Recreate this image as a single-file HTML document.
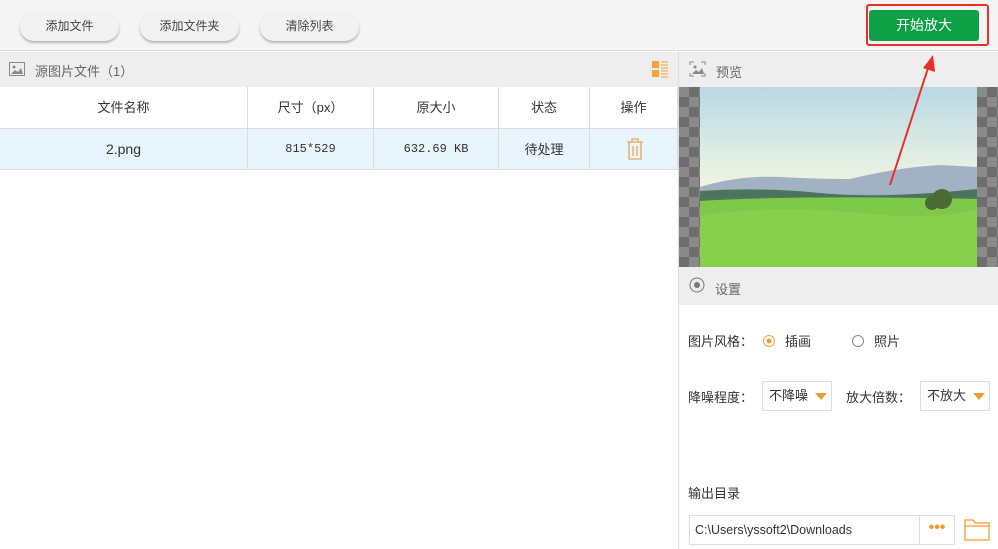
<!DOCTYPE html>
<html><head><meta charset="utf-8"><style>
*{margin:0;padding:0;box-sizing:border-box}
body{width:998px;height:549px;position:relative;overflow:hidden;background:#fff;font-family:"Liberation Sans","Noto Sans CJK SC",sans-serif;font-size:13px;color:#333}
.abs{position:absolute}
.btn{position:absolute;top:12px;height:29px;width:99px;border-radius:14px;background:#f2f2f2;box-shadow:0 2px 2px rgba(0,0,0,.25);text-align:center;line-height:28px;font-size:12px;color:#444}
.th,.td{position:absolute;text-align:center;border-right:1px solid #dcdcdc}
.th{top:87px;height:42px;line-height:42px;border-bottom:1px solid #dcdcdc}
.td{top:129px;height:41px;line-height:41px;background:#e9f5fd;border-bottom:1px solid #dcdcdc}
.chk{background-color:#8a8a8a;background-image:linear-gradient(45deg,#6e6e6e 25%,transparent 25%,transparent 75%,#6e6e6e 75%),linear-gradient(45deg,#6e6e6e 25%,transparent 25%,transparent 75%,#6e6e6e 75%);background-size:20px 20px;background-position:0 0,10px 10px}
</style></head><body>
<div class="abs" style="left:0;top:0;width:998px;height:51px;background:#f4f4f4;border-bottom:1px solid #ddd"></div>
<div class="btn" style="left:20px">添加文件</div>
<div class="btn" style="left:140px">添加文件夹</div>
<div class="btn" style="left:260px">清除列表</div>
<div class="abs" style="left:866px;top:4px;width:123px;height:42px;border:2px solid #e8302a;border-radius:3px"></div>
<div class="abs" style="left:869px;top:10px;width:110px;height:31px;background:#0fa046;border-radius:3px;color:#fff;font-size:14px;text-align:center;line-height:31px">开始放大</div>
<div class="abs" style="left:0;top:52px;width:678px;height:35px;background:#eeeeee"></div>
<svg class="abs" style="left:9px;top:62px" width="16" height="14"><rect x=".5" y=".5" width="15" height="13" fill="none" stroke="#888"/><circle cx="5" cy="5" r="1.5" fill="#888"/><path d="M2 12 L6 8 L9 10 L12 6 L14 12Z" fill="#888"/></svg>
<div class="abs" style="left:35px;top:61px;font-size:13px;color:#666">源图片文件（1）</div>
<svg class="abs" style="left:651px;top:60px" width="18" height="18"><rect x="1" y="1" width="7" height="7" fill="#f7a233"/><rect x="1" y="10" width="7" height="7" fill="#f7a233"/><path d="M10 2h7M10 5h7M10 8h7M10 11h7M10 14h7M10 17h7" stroke="#f7a233"/></svg>
<div class="th" style="left:0;width:248px">文件名称</div>
<div class="th" style="left:248px;width:126px">尺寸（px）</div>
<div class="th" style="left:374px;width:125px">原大小</div>
<div class="th" style="left:499px;width:91px">状态</div>
<div class="th" style="left:590px;width:88px">操作</div>
<div class="td" style="left:0;width:248px;font-size:14px">2.png</div>
<div class="td" style="left:248px;width:126px;font-family:'Liberation Mono',monospace;font-size:12px">815*529</div>
<div class="td" style="left:374px;width:125px;font-family:'Liberation Mono',monospace;font-size:12px">632.69 KB</div>
<div class="td" style="left:499px;width:91px">待处理</div>
<div class="td" style="left:590px;width:88px"></div>
<svg class="abs" style="left:625px;top:138px" width="20" height="22"><path d="M2 4h16M7 4V1h6v3M4 4v17h12V4M8 8v10M12 8v10" fill="none" stroke="#e3a85a" stroke-width="1.3"/></svg>
<div class="abs" style="left:678px;top:51px;width:1px;height:498px;background:#ddd"></div>
<div class="abs" style="left:679px;top:52px;width:319px;height:35px;background:#eeeeee"></div>
<svg class="abs" style="left:689px;top:61px" width="17" height="16"><path d="M1 4V1h4M12 1h4v3M16 12v3h-4M5 15H1v-3" fill="none" stroke="#888"/><circle cx="6" cy="6" r="1.5" fill="#888"/><path d="M3 13L7 9 10 11 13 7 15 13Z" fill="#888"/></svg>
<div class="abs" style="left:716px;top:62px;color:#666">预览</div>
<div class="abs chk" style="left:679px;top:87px;width:21px;height:180px"></div>
<div class="abs chk" style="left:977px;top:87px;width:21px;height:180px"></div>
<div class="abs" style="left:700px;top:87px;width:277px;height:180px;background:linear-gradient(180deg,#b8d8e4 0%,#e2eee4 40%,#f3f4df 58%,#9fb3c7 64%)"></div>
<svg class="abs" style="left:700px;top:87px" width="277" height="180"><path d="M0 100 Q40 88 80 90 T150 92 Q200 80 240 78 L277 80 L277 110 L0 110Z" fill="#8ea1bb" opacity=".8"/><path d="M0 104 Q60 100 120 106 T277 102 L277 118 L0 118Z" fill="#3d6a4a" opacity=".85"/><path d="M0 114 Q100 108 277 112 L277 180 L0 180Z" fill="#7ec94a"/><path d="M0 128 Q80 118 160 126 T277 122 L277 180 L0 180Z" fill="#8fd44c" opacity=".6"/><circle cx="242" cy="112" r="10" fill="#4e6a34"/><circle cx="232" cy="116" r="7" fill="#4e6a34"/></svg>
<svg class="abs" style="left:885px;top:50px" width="55" height="140"><path d="M5 135 L45 12" stroke="#e8302a" stroke-width="2"/><path d="M38 18 L48 5 L50 22Z" fill="#e8302a"/></svg>
<div class="abs" style="left:679px;top:267px;width:319px;height:38px;background:#eeeeee"></div>
<svg class="abs" style="left:689px;top:277px" width="16" height="16"><circle cx="8" cy="8" r="7" fill="none" stroke="#777"/><circle cx="8" cy="8" r="3" fill="#777"/></svg>
<div class="abs" style="left:715px;top:279px;color:#666">设置</div>
<div class="abs" style="left:688px;top:331px">图片风格：</div>
<svg class="abs" style="left:762px;top:334px" width="14" height="14"><circle cx="7" cy="7" r="5.5" fill="none" stroke="#f29b30"/><circle cx="7" cy="7" r="2.5" fill="#f29b30"/></svg>
<div class="abs" style="left:785px;top:331px">插画</div>
<svg class="abs" style="left:851px;top:334px" width="14" height="14"><circle cx="7" cy="7" r="5.5" fill="none" stroke="#888"/></svg>
<div class="abs" style="left:874px;top:331px">照片</div>
<div class="abs" style="left:688px;top:387px">降噪程度：</div>
<div class="abs" style="left:762px;top:381px;width:70px;height:30px;border:1px solid #ddd;padding-left:6px;line-height:28px">不降噪</div>
<svg class="abs" style="left:815px;top:393px" width="12" height="7"><path d="M0 0h12L6 7Z" fill="#f29b30"/></svg>
<div class="abs" style="left:846px;top:387px">放大倍数：</div>
<div class="abs" style="left:920px;top:381px;width:70px;height:30px;border:1px solid #ddd;padding-left:6px;line-height:28px">不放大</div>
<svg class="abs" style="left:973px;top:393px" width="12" height="7"><path d="M0 0h12L6 7Z" fill="#f29b30"/></svg>
<div class="abs" style="left:688px;top:483px">输出目录</div>
<div class="abs" style="left:689px;top:515px;width:231px;height:30px;border:1px solid #ddd;padding-left:5px;line-height:28px;font-size:12.5px">C:\Users\yssoft2\Downloads</div>
<div class="abs" style="left:919px;top:515px;width:36px;height:30px;border:1px solid #ddd;color:#f29b30;text-align:center;line-height:24px;font-size:16px;font-weight:bold">•••</div>
<svg class="abs" style="left:964px;top:518px" width="26" height="24"><path d="M1 4V2h8l2 3h14v17H1Z M1 8h24" fill="none" stroke="#f29b30" stroke-width="1.3"/></svg>
</body></html>
